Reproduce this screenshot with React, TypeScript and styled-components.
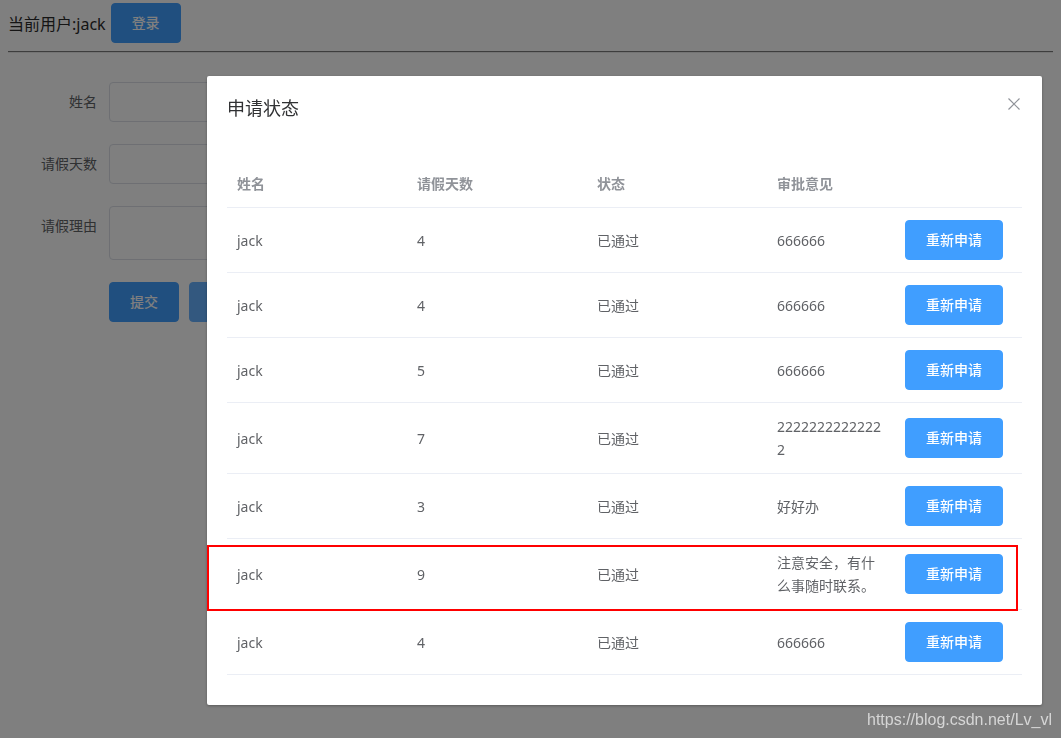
import React from 'react';
import styled, { createGlobalStyle } from 'styled-components';

type Leave = {
  name: string;
  days: number;
  status: string;
  comment: string;
};

const leaves: Leave[] = [
  { name: 'jack', days: 4, status: '已通过', comment: '666666' },
  { name: 'jack', days: 4, status: '已通过', comment: '666666' },
  { name: 'jack', days: 5, status: '已通过', comment: '666666' },
  { name: 'jack', days: 7, status: '已通过', comment: '22222222222222' },
  { name: 'jack', days: 3, status: '已通过', comment: '好好办' },
  { name: 'jack', days: 9, status: '已通过', comment: '注意安全，有什么事随时联系。' },
  { name: 'jack', days: 4, status: '已通过', comment: '666666' },
];

const columns = [
  { title: '姓名', width: 180 },
  { title: '请假天数', width: 180 },
  { title: '状态', width: 180 },
  { title: '审批意见', width: 128 },
  { title: '', width: 127 },
];

const GlobalStyle = createGlobalStyle`
  html, body {
    margin: 0;
    padding: 0;
    background: #fff;
    font-family: "Noto Sans", "Noto Sans CJK SC", sans-serif;
    color: #303133;
  }
`;

export default function App() {
  return (
    <>
      <GlobalStyle />
      <Page>
        <TopBar>
          <CurrentUser>当前用户:jack</CurrentUser>
          <Button>登录</Button>
        </TopBar>
        <Divider />
        <Form>
          <FormItem>
            <Label>姓名</Label>
            <Input />
          </FormItem>
          <FormItem>
            <Label>请假天数</Label>
            <Input />
          </FormItem>
          <FormItem>
            <Label>请假理由</Label>
            <TextArea rows={2} />
          </FormItem>
          <FormItem>
            <Label />
            <Actions>
              <Button>提交</Button>
              <Button $hover>重置</Button>
            </Actions>
          </FormItem>
        </Form>
      </Page>

      <Overlay />
      <Dialog>
        <DialogHeader>
          <DialogTitle>申请状态</DialogTitle>
          <CloseButton aria-label="Close">
            <svg width="12" height="12" viewBox="0 0 12 12">
              <path d="M0.5 0.5 L11.5 11.5 M11.5 0.5 L0.5 11.5" stroke="#909399" strokeWidth="1.2" fill="none" />
            </svg>
          </CloseButton>
        </DialogHeader>
        <DialogBody>
          <Table>
            <colgroup>
              {columns.map((c, i) => (
                <col key={i} style={{ width: c.width }} />
              ))}
            </colgroup>
            <thead>
              <tr>
                {columns.map((c, i) => (
                  <Th key={i}>
                    <Cell>{c.title}</Cell>
                  </Th>
                ))}
              </tr>
            </thead>
            <tbody>
              {leaves.map((row, i) => (
                <tr key={i}>
                  <Td><Cell>{row.name}</Cell></Td>
                  <Td><Cell>{row.days}</Cell></Td>
                  <Td><Cell>{row.status}</Cell></Td>
                  <Td><Cell>{row.comment}</Cell></Td>
                  <Td>
                    <Cell>
                      <Button>重新申请</Button>
                    </Cell>
                  </Td>
                </tr>
              ))}
            </tbody>
          </Table>
        </DialogBody>
        <Highlight />
      </Dialog>
      <Watermark>https://blog.csdn.net/Lv_vl</Watermark>
    </>
  );
}

const Page = styled.div`
  padding: 0 8px;
  height: 738px;
  box-sizing: border-box;
`;

const TopBar = styled.div`
  display: flex;
  align-items: center;
  gap: 5px;
  padding-top: 3px;
`;

const CurrentUser = styled.span`
  font-size: 16px;
  color: #2b2b2b;
`;

const Divider = styled.hr`
  margin: 8px 0 0;
  border: none;
  border-top: 1px solid #7a7a7a;
  border-bottom: 1px solid #e8e8e8;
`;

const Form = styled.form`
  margin: 29px 0 0 1px;
`;

const FormItem = styled.div`
  display: flex;
  align-items: flex-start;
  margin-bottom: 22px;
`;

const Label = styled.label`
  width: 100px;
  box-sizing: border-box;
  padding-right: 12px;
  text-align: right;
  font-size: 14px;
  line-height: 40px;
  color: #606266;
`;

const Input = styled.input`
  width: 420px;
  height: 40px;
  box-sizing: border-box;
  border: 1px solid #dcdfe6;
  border-radius: 4px;
  padding: 0 15px;
  font-size: 14px;
`;

const TextArea = styled.textarea`
  width: 420px;
  height: 54px;
  box-sizing: border-box;
  border: 1px solid #dcdfe6;
  border-radius: 4px;
  padding: 5px 15px;
  font-size: 14px;
  resize: vertical;
  font-family: inherit;
`;

const Actions = styled.div`
  display: flex;
  gap: 10px;
`;

const Button = styled.button<{ $hover?: boolean }>`
  height: 40px;
  box-sizing: border-box;
  padding: 0 20px;
  border: 1px solid ${({ $hover }) => ($hover ? '#66b1ff' : '#409eff')};
  border-radius: 4px;
  background: ${({ $hover }) => ($hover ? '#66b1ff' : '#409eff')};
  color: #fff;
  font-family: inherit;
  font-size: 14px;
  font-weight: 500;
  line-height: 1;
  white-space: nowrap;
  cursor: pointer;
`;

const Overlay = styled.div`
  position: fixed;
  inset: 0;
  background: rgba(0, 0, 0, 0.5);
`;

const Dialog = styled.div`
  position: fixed;
  left: 207px;
  top: 76px;
  width: 835px;
  background: #fff;
  border-radius: 2px;
  box-shadow: 0 1px 3px rgba(0, 0, 0, 0.3);
`;

const DialogHeader = styled.div`
  position: relative;
  padding: 20px 20px 10px;
`;

const DialogTitle = styled.span`
  display: block;
  font-size: 18px;
  line-height: 24px;
  color: #303133;
`;

const CloseButton = styled.button`
  position: absolute;
  top: 22px;
  right: 22px;
  padding: 0;
  border: none;
  background: transparent;
  display: flex;
  cursor: pointer;
`;

const DialogBody = styled.div`
  padding: 30px 20px;
`;

const Table = styled.table`
  width: 100%;
  table-layout: fixed;
  border-collapse: collapse;
  font-size: 14px;
  color: #606266;
`;

const Th = styled.th`
  padding: 12px 0;
  text-align: left;
  font-weight: 700;
  color: #909399;
  border-bottom: 1px solid #ebeef5;
`;

const Td = styled.td`
  padding: 12px 0;
  vertical-align: middle;
  border-bottom: 1px solid #ebeef5;
`;

const Cell = styled.div`
  padding: 0 10px;
  line-height: 23px;
  word-break: break-all;
  box-sizing: border-box;
`;

const Highlight = styled.div`
  position: absolute;
  left: 0;
  top: 469px;
  width: 811px;
  height: 66px;
  box-sizing: border-box;
  border: 2px solid #ff0000;
  pointer-events: none;
`;

const Watermark = styled.div`
  position: fixed;
  right: 9px;
  bottom: 9px;
  font-family: "Liberation Sans", Arial, sans-serif;
  font-size: 16px;
  color: #d6d6d6;
`;
